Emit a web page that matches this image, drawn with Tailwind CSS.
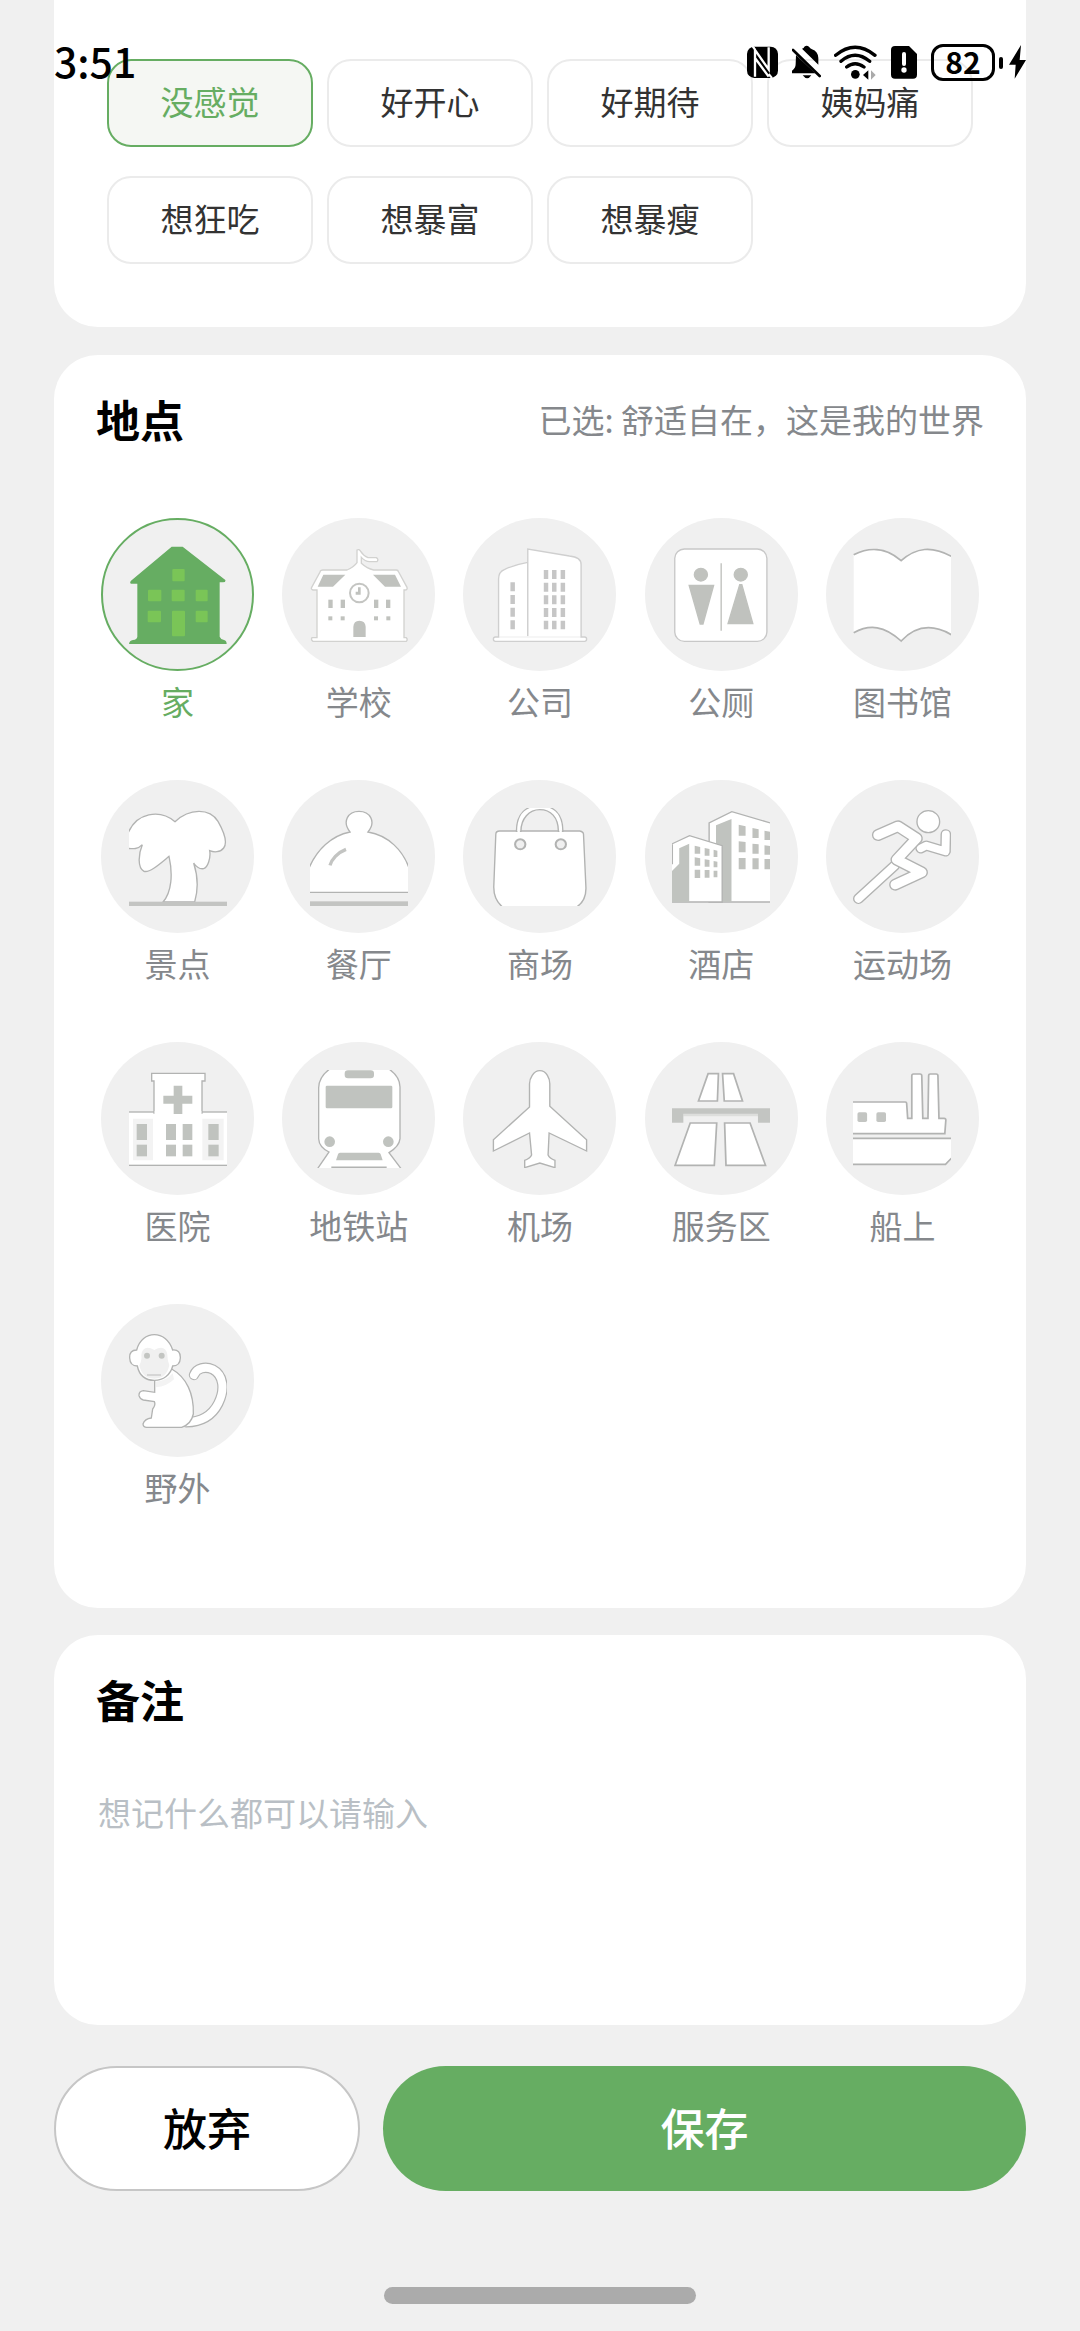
<!DOCTYPE html>
<html lang="zh-CN">
<head>
    <meta charset="UTF-8">
    <meta name="viewport" content="width=device-width, initial-scale=1.0">
    <title>记录</title>
    <script src="https://cdn.jsdelivr.net/npm/@tailwindcss/browser@4"></script>
</head>
<body class="relative bg-[#f0f0f0] font-['Noto_Sans_CJK_SC',sans-serif] text-[33px] leading-[36px] text-[#333]">

    <!-- Status bar, floats over the scrolled content -->
    <div class="absolute inset-x-0 top-0 z-10 flex items-start justify-between px-[54px] pt-11 text-black">
        <span class="text-[41px] leading-8 font-medium">3:51</span>
        <div class="flex items-center">
            <svg class="h-9 w-[31px]" viewBox="57 73 93 108">
                <rect x="57" y="78" width="93" height="94" rx="22"/>
                <path d="M81 168V88L122 146V80M81 112L122 168" fill="none" stroke="#fff" stroke-width="7"/>
                <path d="M74 78L82 88M122 160L132 172" stroke="#fff" stroke-width="6"/>
            </svg>
            <svg class="ml-3.5 h-9 w-[29px]" viewBox="192 73 87 108">
                <path d="M222 84Q228 83 229 78Q236 72 243 78Q246 83 252 86Q270 92 271 112V132ZM204 103L262 158H192V150Q203 142 203 130ZM224 164H250Q238 182 224 164Z"/>
                <path d="M195 88L275 166" stroke="#000" stroke-width="8" stroke-linecap="round"/>
            </svg>
            <svg class="ml-[13px] h-9 w-[43px]" viewBox="317 73 129 108" fill="none" stroke="#000" stroke-width="10" stroke-linecap="round">
                <path d="M322 104Q380 56 440 104M338 122Q380 86 424 122M355 139Q380 119 407 139"/>
                <circle cx="381" cy="161" r="13" fill="#000" stroke="none"/>
                <path d="M404 163L420 149V177Z" fill="#000" stroke="none"/>
                <path d="M442 163L428 149V177Z" fill="#aaa" stroke="none"/>
            </svg>
            <svg class="ml-3.5 h-9 w-[26px]" viewBox="486 73 78 108">
                <path d="M498 76H540L564 100V162Q564 174 552 174H498Q486 174 486 162V88Q486 76 498 76Z"/>
                <path d="M525 100V130" stroke="#fff" stroke-width="12" stroke-linecap="round"/>
                <circle cx="525" cy="148" r="8" fill="#fff"/>
            </svg>
            <span class="ml-3.5 flex h-[37px] w-16 items-center justify-center rounded-xl border-3 border-black pb-1 text-[30px] leading-8 font-bold">82</span>
            <span class="ml-1 h-3 w-1 rounded-full bg-black"></span>
            <svg class="ml-1.5 h-9 w-[17px]" viewBox="837 73 51 108">
                <path d="M873 73L837 132H857L854 174L888 118H869Z"/>
            </svg>
        </div>
    </div>

    <main class="flex flex-col px-[54px]">
        <!-- Mood -->
        <section class="rounded-b-[44px] bg-white px-[53px] pt-[59px] pb-[63px]">
            <div class="grid grid-cols-4 gap-x-3.5 gap-y-[29px]">
                <button class="h-[88px] rounded-3xl border-2 border-[#66ad62] bg-[#f5f7f3] pb-1 text-[#66ad62]" aria-pressed="true">没感觉</button>
                <button class="h-[88px] rounded-3xl border-2 border-[#ebebeb] pb-1">好开心</button>
                <button class="h-[88px] rounded-3xl border-2 border-[#ebebeb] pb-1">好期待</button>
                <button class="h-[88px] rounded-3xl border-2 border-[#ebebeb] pb-1">姨妈痛</button>
                <button class="h-[88px] rounded-3xl border-2 border-[#ebebeb] pb-1">想狂吃</button>
                <button class="h-[88px] rounded-3xl border-2 border-[#ebebeb] pb-1">想暴富</button>
                <button class="h-[88px] rounded-3xl border-2 border-[#ebebeb] pb-1">想暴瘦</button>
            </div>
        </section>

        <!-- Place -->
        <section class="mt-7 rounded-[44px] bg-white pt-[34px] pb-[103px]">
            <div class="flex h-[60px] items-center justify-between px-[42px]">
                <h2 class="text-[44px] leading-[60px] font-bold text-black">地点</h2>
                <p class="text-[#85888c]">已选: 舒适自在，这是我的世界</p>
            </div>
            <div class="mt-[69px] grid grid-cols-5 gap-y-[61px] px-[33px]" id="place-grid">
                <!-- Places are added here -->
            </div>
        </section>

        <!-- Note -->
        <section class="mt-[27px] rounded-[44px] bg-white px-[42px] pt-[34px] pb-6">
            <h2 class="text-[44px] leading-[60px] font-bold text-black"><label for="note">备注</label></h2>
            <textarea class="mt-[65px] block h-[207px] w-full resize-none px-0.5 placeholder:text-[#b9bfc5] focus:outline-none" id="note" placeholder="想记什么都可以请输入"></textarea>
        </section>

        <div class="mt-[41px] grid grid-cols-[306fr_643fr] gap-x-[23px] text-[44px] font-medium">
            <button class="h-[125px] rounded-full border-2 border-[#c6c6c6] bg-white pb-1 text-black">放弃</button>
            <button class="h-[125px] rounded-full bg-[#66ad62] pb-1 text-white">保存</button>
        </div>

        <div class="mt-24 mb-[27px] h-[17px] w-[312px] self-center rounded-full bg-[#ababab]"></div>
    </main>

    <script>
        const places = [
            { name: '家', box: '118 136 294 294', art: `
                <path d="M246 138H279L407 238Q409 245 400 245H390V408Q393 416 403 418Q411 420 411 430H118Q119 420 130 418Q142 416 143 408V249H124Q119 246 124 240Z" fill="#66ad62" stroke="none"/>
                <g fill="#7ac557" stroke="none">
                    <rect x="248" y="205" width="37" height="37" rx="3"/>
                    <rect x="175" y="267" width="40" height="35" rx="3"/><rect x="246" y="267" width="39" height="35" rx="3"/><rect x="318" y="267" width="36" height="35" rx="3"/>
                    <rect x="174" y="330" width="40" height="35" rx="3"/><rect x="318" y="330" width="36" height="35" rx="3"/>
                    <rect x="247" y="330" width="39" height="77" rx="3"/>
                </g>` },
            { name: '学校', box: '659 136 294 294', art: `
                <g stroke="#d2d2d0">
                    <path d="M680 268H668Q661 266 664 260L689 214Q690 208 698 208H770Q790 200 800 186V148Q806 144 811 152Q820 166 833 171H858Q866 176 860 183H838Q824 182 813 170V188Q830 204 850 208H918Q923 208 925 214L950 260Q952 268 944 268H941V411H948Q953 416 948 422H668Q661 418 665 411H680Z"/>
                    <circle cx="807" cy="277" r="28" stroke="#c4c5c2" stroke-width="6"/>
                </g>
                <g fill="#c0c2be" stroke="none">
                    <path d="M699 222H765L728 258H682ZM848 222H914L932 258H884Z"/>
                    <path d="M803 260H811V282H796V273H803Z"/>
                    <rect x="714" y="297" width="13" height="25"/><rect x="751" y="297" width="13" height="25"/><rect x="851" y="297" width="13" height="25"/><rect x="887" y="297" width="13" height="25"/>
                    <rect x="714" y="347" width="12" height="12"/><rect x="751" y="347" width="12" height="12"/><rect x="851" y="347" width="12" height="12"/><rect x="888" y="347" width="12" height="12"/>
                    <path d="M789 409V379Q790 360 807 360Q825 360 826 379V409Z"/>
                </g>` },
            { name: '公司', box: '122 136 285 294', art: `
                <g stroke="#cfcfcf">
                    <path d="M144 412V235Q144 213 162 206Q190 192 229 185V412Z"/>
                    <path d="M229 412V145L350 166Q385 170 384 192V412Z"/>
                    <rect x="129" y="409" width="271" height="13" rx="6"/>
                    <path d="M146 409H382" stroke="#fff"/>
                </g>
                <g stroke="#c6c6c6" stroke-width="13" stroke-dasharray="27 11">
                    <path d="M185 245V386"/>
                    <path d="M282 208V386M306 208V386M331 208V386"/>
                </g>` },
            { name: '公厕', box: '647 136 285 294', art: `
                <rect x="655" y="145" width="268" height="277" rx="28" stroke="#c8c8c8"/>
                <path d="M790 188V390" stroke="#c0c2be"/>
                <g fill="#c0c2be" stroke="#c0c2be">
                    <circle cx="731" cy="222" r="19"/><circle cx="847" cy="222" r="19"/>
                    <path d="M697 254H768L737 370H729ZM844 252H850L882 369H810Z"/>
                </g>` },
            { name: '图书馆', box: '1171 136 285 294', art: `
                <path d="M1173 162C1215 140 1265 138 1311 180C1355 140 1400 135 1457 167V402C1400 368 1350 378 1311 421C1262 375 1220 370 1173 396Z" stroke="none"/>
                <path d="M1173 162C1215 140 1265 138 1311 180C1355 140 1400 135 1457 167M1173 396C1220 370 1262 375 1311 421C1350 378 1400 368 1457 402" fill="none" stroke-width="5"/>` },
            { name: '景点', box: '118 112 294 294', art: `
                <path d="M114 190C140 125 210 115 256 153C300 112 360 112 385 152C402 182 415 215 402 232C392 246 372 245 360 240C364 262 354 290 342 294C330 296 318 286 312 277C326 320 325 360 315 394H220C246 365 250 310 238 257C210 280 180 307 163 302C143 292 146 250 158 222C145 236 130 235 114 233Z"/>
                <rect x="118" y="393" width="294" height="13" fill="#c3c4c2" stroke="none"/>` },
            { name: '餐厅', box: '660 112 294 294', art: `
                <path d="M656 295C680 236 725 195 780 184C755 152 775 122 807 122S860 152 834 184C895 194 940 240 958 295V365H656Z"/>
                <path d="M720 284C725 266 742 246 768 236" fill="none" stroke="#c3c4c2" stroke-width="10"/>
                <rect x="660" y="392" width="294" height="14" fill="#c3c4c2" stroke="none"/>` },
            { name: '商场', box: '122 113 285 294', art: `
                <path d="M136 192Q136 182 147 182H380Q391 184 391 192L398 350Q400 392 368 412H158Q130 390 130 350Z"/>
                <path d="M196 183C196 128 225 106 264 106S331 128 331 183H318C318 140 295 118 264 118S209 145 209 183Z"/>
                <path d="M199 183H206M321 183H328" stroke="#fff" stroke-width="6"/>
                <circle cx="207" cy="222" r="15" fill="#f0f0f0" stroke-width="6"/><circle cx="325" cy="222" r="15" fill="#f0f0f0" stroke-width="6"/>` },
            { name: '酒店', box: '647 113 285 294', art: `
                <path d="M755 240V158L821 124L940 160V395H755Z"/>
                <path d="M775 165L820 146V395H775Z" fill="#c0c3bf" stroke="none"/>
                <path d="M640 224L698 196L793 226V395H640Z"/>
                <path d="M647 396V302L668 280V234L697 220V396Z" fill="#c0c3bf" stroke="none"/>
                <path d="M648 222V282" fill="none"/>
                <g fill="#c0c2be" stroke="none">
                    <path d="M841 163L861 168V196H841ZM881 173L899 177V203H881ZM916 181L934 185V209H916Z"/>
                    <path d="M841 213L861 215V246H841ZM881 220L899 222V250H881ZM916 225L934 227V253H916Z"/>
                    <path d="M841 263H861V297H841ZM881 264H899V297H881ZM916 266H934V297H916Z"/>
                    <path d="M713 226L729 230V250H713ZM742 233L756 236V256H742ZM768 238L779 241V260H768Z"/>
                    <path d="M713 261L729 264V286H713ZM742 267L756 269V289H742ZM768 272L779 274V291H768Z"/>
                    <path d="M713 298H729V323H713ZM742 299H756V322H742ZM768 301H779V321H768Z"/>
                </g>` },
            { name: '运动场', box: '1171 113 285 294', art: `
                <circle cx="1390" cy="154" r="33"/>
                <g fill="none" stroke-linejoin="round">
                    <path d="M1368 234L1384 226L1440 243L1441 192" stroke-width="31" stroke-linecap="round"/>
                    <path d="M1368 234L1384 226L1440 243L1441 192" stroke="#fff" stroke-width="23" stroke-linecap="round"/>
                    <path d="M1292 286L1187 385" stroke-width="32" stroke-linecap="round"/>
                    <path d="M1292 286L1187 385" stroke="#fff" stroke-width="24" stroke-linecap="round"/>
                    <path d="M1244 194L1302 168L1356 204L1298 268L1371 306L1294 343" stroke-width="36" stroke-linecap="round"/>
                    <path d="M1244 194L1302 168L1356 204L1298 268L1371 306L1294 343" stroke="#fff" stroke-width="28" stroke-linecap="round"/>
                </g>` },
            { name: '医院', box: '118 119 294 294', art: `
                <rect x="114" y="245" width="302" height="160"/>
                <path d="M193 250V152H186V129H346V152H337V250" />
                <path d="M195 246H335" stroke="#fff" stroke-width="8"/>
                <path d="M130 265H190V390H130ZM338 265H402V390H338Z" fill="#f3f3f3" stroke="none"/>
                <g fill="#c0c3bf" stroke="none">
                    <path d="M252 166h26v30h30v24h-30v31h-26v-31h-31v-24h31z"/>
                    <rect x="141" y="281" width="31" height="48"/><rect x="229" y="281" width="30" height="48"/><rect x="279" y="281" width="29" height="48"/><rect x="356" y="281" width="31" height="48"/>
                    <rect x="141" y="343" width="31" height="35"/><rect x="229" y="343" width="30" height="35"/><rect x="279" y="343" width="29" height="35"/><rect x="356" y="343" width="31" height="35"/>
                </g>` },
            { name: '地铁站', box: '660 119 294 294', art: `
                <path d="M686 172Q687 138 722 114H894Q930 138 930 170V325Q928 348 897 367L934 416H682L717 365Q687 350 686 325Z"/>
                <path d="M724 411H890" stroke-width="5"/>
                <g fill="#c0c3bf" stroke="none">
                    <rect x="764" y="120" width="88" height="24" rx="10"/>
                    <rect x="707" y="166" width="200" height="68" rx="4"/>
                    <circle cx="719" cy="334" r="16"/><circle cx="895" cy="334" r="16"/>
                    <path d="M750 367H866Q871 367 872 372L878 390H738L744 372Q745 367 750 367Z"/>
                </g>` },
            { name: '机场', box: '122 119 285 294', art: `
                <path d="M264 121C245 121 234 145 234 160V230L129 328V362L234 308L240 374Q236 384 220 390V412L264 398L308 412V390Q292 384 288 374L291 308L400 362V328L293 228V160C293 145 284 121 264 121Z"/>` },
            { name: '服务区', box: '647 119 285 294', art: `
                <path d="M752 130H782L779 212H724ZM794 130H826L852 212H799ZM700 278H777L770 405H656ZM800 278H874L919 405H804Z" stroke-width="5"/>
                <path d="M680 248H898V258H680Z" fill="#dddedc" stroke="none"/>
                <path d="M647 234H932V277H897V250H680V277H647Z" fill="#c3c5c2" stroke="none"/>` },
            { name: '船上', box: '1171 119 285 294', art: `
                <path d="M1165 215H1323Q1327 215 1327 219L1330 264H1342V136Q1342 131 1347 131H1366Q1371 131 1371 136L1374 264H1389L1391 136Q1391 131 1396 131H1413Q1418 131 1418 136L1421 264H1436Q1441 264 1441 269L1438 310H1165Z" stroke-width="5"/>
                <path d="M1165 324H1470V370L1440 402H1165Z" stroke-width="5"/>
                <rect x="1184" y="246" width="28" height="29" rx="5" fill="#c3c5c2" stroke="none"/><rect x="1239" y="246" width="28" height="29" rx="5" fill="#c3c5c2" stroke="none"/>` },
            { name: '野外', box: '237 154 294 294', art: `
                <g fill="none" stroke-linecap="round">
                    <path d="M432 283C440 262 466 256 488 266C522 284 525 328 505 368C488 402 455 424 408 425" stroke-width="31"/>
                    <path d="M432 283C440 262 466 256 488 266C522 284 525 328 505 368C488 402 455 424 408 425" stroke="#fff" stroke-width="24"/>
                </g>
                <path d="M314 295V335L280 330Q266 332 267 345Q270 356 280 358L313 363Q318 372 308 385L304 412Q284 414 279 430Q280 440 290 440H395Q424 430 430 400C432 340 410 290 365 265Z"/>
                <path d="M318 303Q350 300 368 278L372 296Q350 318 318 320Z" fill="#f3f3f3" stroke="none"/>
                <path d="M260 208C268 178 290 162 313 162S358 178 368 208Q392 206 391 232Q390 256 368 256C362 282 340 299 313 299S268 285 262 256Q240 256 239 232Q238 208 260 208Z"/>
                <path d="M313 208Q346 190 352 222Q352 240 358 254Q350 294 313 294T268 254Q276 240 274 222Q280 190 313 208Z" fill="#f0f0f0" stroke="none"/>
                <circle cx="291" cy="225" r="9" fill="#c3c5c2" stroke="none"/><circle cx="335" cy="225" r="9" fill="#c3c5c2" stroke="none"/>
                <path d="M291 283H333" stroke="#d0d0d0" stroke-width="5"/>` }
        ];

        const grid = document.getElementById('place-grid');

        function displayPlaces(selected) {
            grid.innerHTML = places.map(place => {
                const on = place.name === selected;
                return `
                    <button class="flex flex-col items-center gap-y-3 ${on ? 'text-[#66ad62]' : 'text-[#85888c]'}" aria-pressed="${on}">
                        <span class="flex size-[153px] items-center justify-center rounded-full bg-[#f0f0f0] ${on ? 'border-2 border-[#66ad62]' : ''}">
                            <svg class="size-[98px]" viewBox="${place.box}" preserveAspectRatio="none" fill="#fff" stroke="#b2b3b2" stroke-width="4" aria-hidden="true">${place.art}</svg>
                        </span>
                        <span>${place.name}</span>
                    </button>
                `;
            }).join('');
        }

        displayPlaces('家');
    </script>
</body>
</html>
